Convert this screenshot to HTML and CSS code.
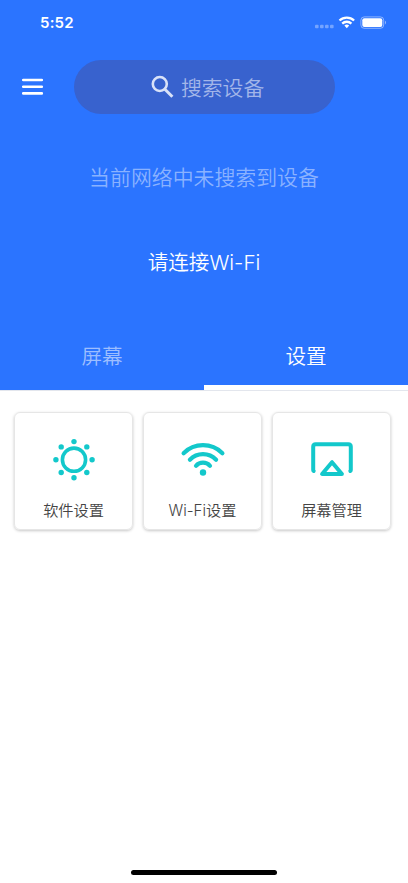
FILE: index.html
```html
<!DOCTYPE html>
<html lang="zh-CN">
<head>
<meta charset="utf-8">
<meta name="viewport" content="width=device-width, initial-scale=1">
<title>搜索设备</title>
<link rel="stylesheet" href="styles.css">
</head>
<body>
<div class="app">
  <header class="header">
    <div class="status">
      <span class="time">5:52</span>
      <svg class="status-icons" width="72" height="16" viewBox="0 0 72 16">
        <g fill="#fff" fill-opacity=".35">
          <rect x="1" y="10.8" width="3.6" height="3.4" rx="1"/>
          <rect x="6" y="10.8" width="3.6" height="3.4" rx="1"/>
          <rect x="11" y="10.8" width="3.6" height="3.4" rx="1"/>
          <rect x="16" y="10.8" width="3.6" height="3.4" rx="1"/>
        </g>
        <g fill="none" stroke="#fff" stroke-width="2.3">
          <path d="M25.5 6.5a10.6 10.6 0 0 1 14.6 0"/>
          <path d="M28.2 9.6a6.6 6.6 0 0 1 9.2 0"/>
        </g>
        <path d="M30.4 11.6a3.5 3.5 0 0 1 4.8 0l-2.4 2.6z" fill="#fff"/>
        <rect x="46.9" y="2.9" width="22.8" height="11.4" rx="3.3" fill="none" stroke="#fff" stroke-opacity=".45"/>
        <rect x="48.3" y="4.3" width="20" height="8.6" rx="2" fill="#fff"/>
        <path d="M71 6.8c1.3.5 1.3 3.1 0 3.6z" fill="#fff" fill-opacity=".5"/>
      </svg>
    </div>
    <div class="toolbar">
      <svg class="menu" width="22" height="18" viewBox="0 0 22 18" stroke="#fff" stroke-width="2.6" stroke-linecap="round">
        <path d="M1.2 2h18.6M1.2 8.7h18.6M1.2 15.4h18.6"/>
      </svg>
      <div class="search">
        <svg width="24" height="24" viewBox="0 0 24 24" fill="none" stroke="#d9e2f8">
          <circle cx="8.8" cy="9" r="7" stroke-width="2.6"/>
          <path d="M13.6 14l7.8 7.8" stroke-width="3"/>
        </svg>
        <span>搜索设备</span>
      </div>
    </div>
    <p class="empty">当前网络中未搜索到设备</p>
    <p class="connect">请连接Wi-Fi</p>
    <nav class="tabs">
      <a class="tab">屏幕</a>
      <a class="tab active">设置</a>
    </nav>
  </header>
  <main class="cards">
    <section class="card">
      <svg width="46" height="46" viewBox="0 0 46 46" fill="#13c8cb">
        <circle cx="23" cy="22.7" r="11.6" fill="none" stroke="#13c8cb" stroke-width="3.6"/>
        <circle cx="23" cy="4.6" r="2.7"/><circle cx="23" cy="40.8" r="2.7"/>
        <circle cx="4.9" cy="22.7" r="2.7"/><circle cx="41.1" cy="22.7" r="2.7"/>
        <circle cx="10.2" cy="9.9" r="2.7"/><circle cx="35.8" cy="9.9" r="2.7"/>
        <circle cx="10.2" cy="35.5" r="2.7"/><circle cx="35.8" cy="35.5" r="2.7"/>
      </svg>
      <span>软件设置</span>
    </section>
    <section class="card">
      <svg width="46" height="46" viewBox="0 0 46 46" fill="none" stroke="#13c8cb" stroke-width="4.2" stroke-linecap="round">
        <path d="M3.6 16.2a27.5 27.5 0 0 1 38.8 0"/>
        <path d="M9.9 22.8a18 18 0 0 1 26.2 0"/>
        <path d="M16 28.8a9.5 9.5 0 0 1 14 0"/>
        <circle cx="23" cy="35.5" r="3.2" fill="#13c8cb" stroke="none"/>
      </svg>
      <span>Wi-Fi设置</span>
    </section>
    <section class="card">
      <svg width="46" height="46" viewBox="0 0 46 46" fill="none" stroke="#13c8cb" stroke-width="4" stroke-linecap="round" stroke-linejoin="round">
        <path d="M4.7 34q-.5-.4-.5-1V9.7q0-2.5 2.5-2.5h32.6q2.5 0 2.5 2.5V33q0 .6-.5 1"/>
        <path d="M23 25.2l-9.9 11.8h19.8z"/>
      </svg>
      <span>屏幕管理</span>
    </section>
  </main>
  <div class="home-indicator"></div>
</div>
</body>
</html>
```

FILE: styles.css
```css
* { box-sizing: border-box; }
body {
  margin: 0;
  background: #fff;
  font-family: Inter, "Noto Sans CJK SC", sans-serif;
  font-weight: 350;
}
svg { display: block; flex: none; }
.app {
  height: 883px;
  display: flex;
  flex-direction: column;
}
.header {
  height: 390px;
  background: #2b74ff;
  color: #fff;
  display: flex;
  flex-direction: column;
}
.status {
  height: 60px;
  padding: 14px 22px 0 40px;
  display: flex;
  justify-content: space-between;
  align-items: flex-start;
}
.time {
  font-size: 15px;
  line-height: 18px;
  font-weight: 600;
  letter-spacing: .2px;
}
.toolbar {
  height: 54px;
  padding-left: 22px;
  display: flex;
  align-items: center;
}
.search {
  width: 261px;
  height: 54px;
  margin-left: 30px;
  padding-left: 77px;
  border-radius: 27px;
  background: #3862ce;
  display: flex;
  align-items: center;
  gap: 6px;
  font-size: 20.8px;
  color: #a3b6e9;
}
.search span { margin-top: -1px; }
.empty, .connect {
  margin: 0;
  text-align: center;
  font-size: 20.9px;
  line-height: 30px;
}
.empty {
  margin-top: 49px;
  color: #8ab2ff;
}
.connect {
  margin-top: 55px;
  font-size: 20.6px;
}
.tabs {
  margin-top: auto;
  height: 68px;
  display: flex;
}
.tab {
  flex: 1;
  text-align: center;
  font-size: 20.6px;
  line-height: 70px;
  color: #9dbeff;
}
.tab.active {
  color: #fff;
  border-bottom: 5px solid #fff;
}
.cards {
  flex: 1;
  border-top: 1px solid #e3e6ed;
  padding: 21px 17px 0 14px;
  display: flex;
  align-items: flex-start;
  gap: 10px;
}
.card {
  flex: 1;
  height: 118px;
  padding-top: 24px;
  border: 1px solid #e6e6e6;
  border-radius: 6px;
  box-shadow: 0 1px 3px rgba(0, 0, 0, .22);
  display: flex;
  flex-direction: column;
  align-items: center;
  gap: 17px;
  font-size: 15.2px;
  line-height: 22px;
  color: #444;
}
.home-indicator {
  width: 146px;
  height: 5px;
  margin: 0 auto 8px;
  border-radius: 3px;
  background: #000;
}
```
